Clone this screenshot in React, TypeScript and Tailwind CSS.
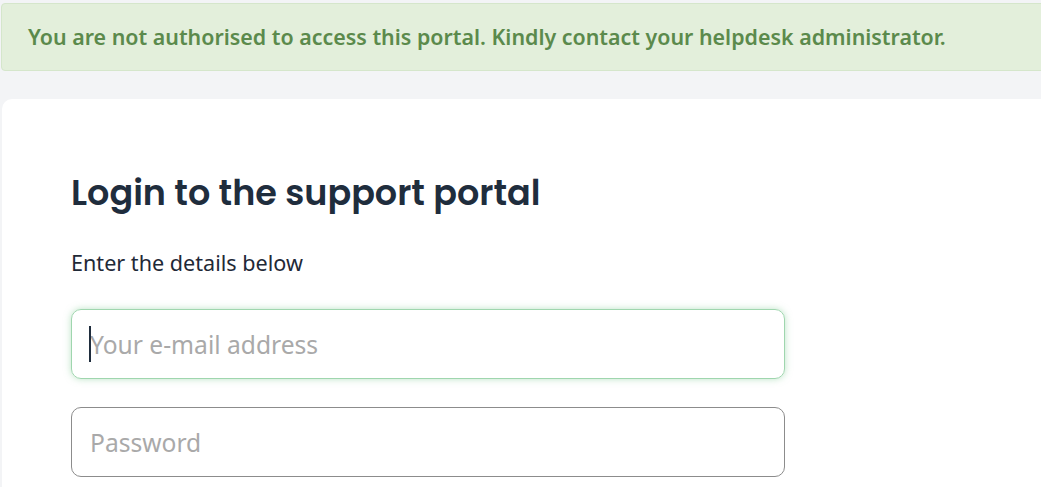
import { useEffect, useRef } from 'react';

const LoginPortal = () => {
  const emailRef = useRef<HTMLInputElement>(null);

  useEffect(() => {
    emailRef.current?.focus();
  }, []);

  return (
    <div className="min-h-screen bg-[#f3f4f6] pt-[3px] pl-[1px] overflow-hidden">
      <div className="w-[1060px] h-[68px] flex items-center px-[26px] rounded-[4px] border border-[#d5e6cb] bg-[#e3efdb]">
        <p className="text-[21.4px] font-semibold text-[#5b8a4c] font-['Source_Sans_Pro','Noto_Sans',sans-serif]">
          You are not authorised to access this portal. Kindly contact your helpdesk administrator.
        </p>
      </div>

      <div className="mt-[28px] ml-[1px] w-[1080px] h-[400px] bg-white rounded-tl-[10px] pl-[69px] pt-[72px]">
        <h1 className="text-[35px] font-semibold leading-[44px] text-[#1f2d3d] font-['Poppins','Inter',sans-serif]">
          Login to the support portal
        </h1>
        <p className="mt-[35px] text-[21.6px] leading-[26px] text-[#1f2937] font-['Source_Sans_Pro','Noto_Sans',sans-serif]">
          Enter the details below
        </p>

        <div className="mt-[33px] w-[714px] flex flex-col gap-[28px]">
          <div className="relative">
            <input
              ref={emailRef}
              type="email"
              placeholder="Your e-mail address"
              className="h-[70px] w-full rounded-[10px] border border-[#9fd6ae] px-[18px] text-[24.6px] text-[#1f2937] caret-[#1f2937] outline-none shadow-[0_0_7px_rgba(120,200,140,0.5)] placeholder:text-[#a9a9a9] font-['Source_Sans_Pro','Noto_Sans',sans-serif]"
            />
            <span className="absolute left-[18px] top-[17px] h-[36px] w-[2px] bg-[#1f2d3d]" />
          </div>
          <input
            type="password"
            placeholder="Password"
            className="h-[70px] w-full rounded-[10px] border border-[#8c8c8c] px-[18px] text-[24.6px] text-[#1f2937] outline-none placeholder:text-[#a9a9a9] font-['Source_Sans_Pro','Noto_Sans',sans-serif]"
          />
        </div>
      </div>
    </div>
  );
};

export default LoginPortal;
